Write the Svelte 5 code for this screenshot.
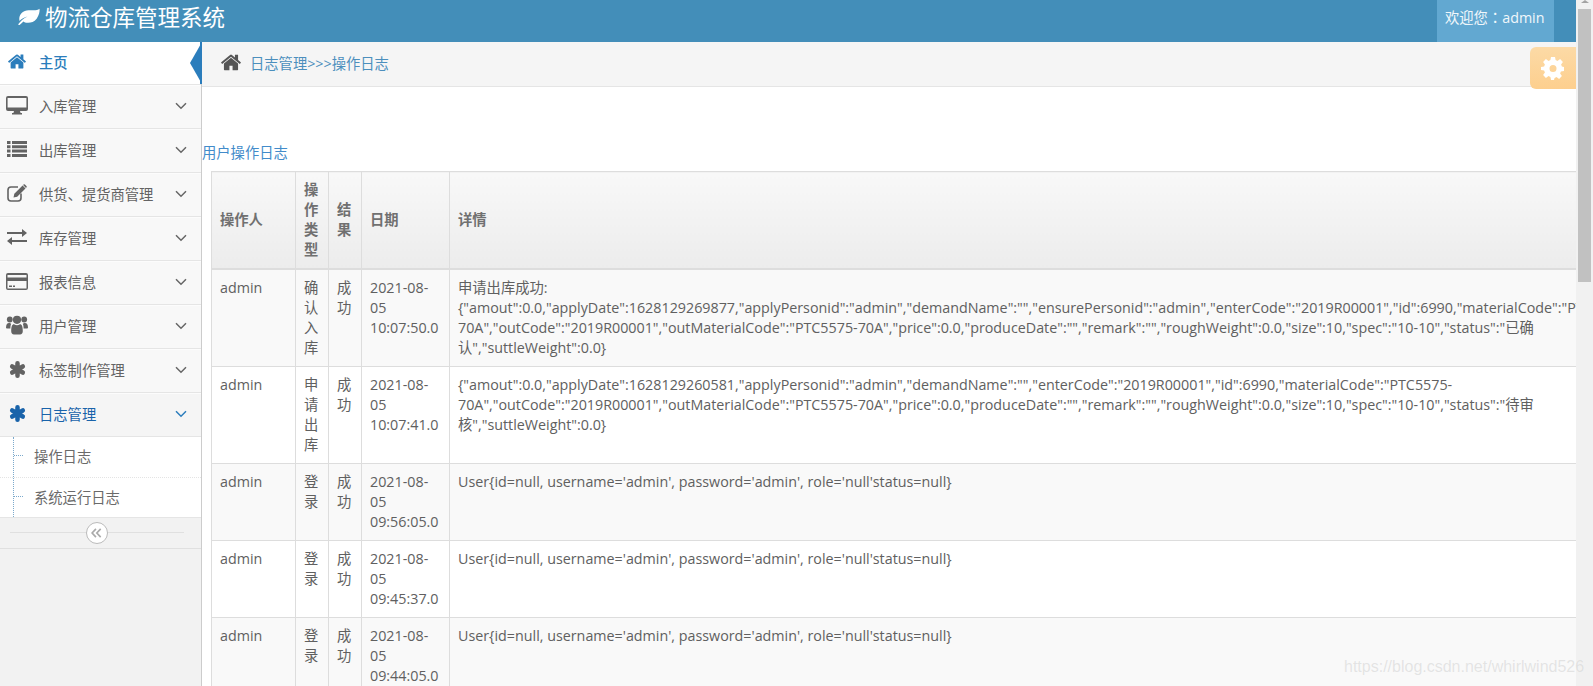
<script>
  const menu = [
    { label: '入库管理', icon: 'desktop' },
    { label: '出库管理', icon: 'list' },
    { label: '供货、提货商管理', icon: 'edit' },
    { label: '库存管理', icon: 'exchange' },
    { label: '报表信息', icon: 'card' },
    { label: '用户管理', icon: 'group' },
    { label: '标签制作管理', icon: 'asterisk' }
  ];
  const subs = ['操作日志', '系统运行日志'];
  const userLine = "User{id=null, username='admin', password='admin', role='null'status=null}";
  const rows = [
    {
      type: '确认入库', date: '2021-08-05 10:07:50.0',
      lines: [
        '申请出库成功:',
        '{"amout":0.0,"applyDate":1628129269877,"applyPersonid":"admin","demandName":"","ensurePersonid":"admin","enterCode":"2019R00001","id":6990,"materialCode":"PTC5575-',
        '70A","outCode":"2019R00001","outMaterialCode":"PTC5575-70A","price":0.0,"produceDate":"","remark":"","roughWeight":0.0,"size":10,"spec":"10-10","status":"已确',
        '认","suttleWeight":0.0}'
      ]
    },
    {
      type: '申请出库', date: '2021-08-05 10:07:41.0',
      lines: [
        '{"amout":0.0,"applyDate":1628129260581,"applyPersonid":"admin","demandName":"","enterCode":"2019R00001","id":6990,"materialCode":"PTC5575-',
        '70A","outCode":"2019R00001","outMaterialCode":"PTC5575-70A","price":0.0,"produceDate":"","remark":"","roughWeight":0.0,"size":10,"spec":"10-10","status":"待审',
        '核","suttleWeight":0.0}'
      ]
    },
    { type: '登录', date: '2021-08-05 09:56:05.0', lines: [userLine] },
    { type: '登录', date: '2021-08-05 09:45:37.0', lines: [userLine] },
    { type: '登录', date: '2021-08-05 09:44:05.0', lines: [userLine] }
  ];
  const homePath = 'M1472 992v480q0 26-19 45t-45 19h-384v-384h-256v384h-384q-26 0-45-19t-19-45v-480q0-1 .5-3t.5-3l575-474 575 474q1 2 1 6zm223-69l-62 74q-8 9-21 11h-3q-13 0-21-7l-692-577-692 577q-12 8-24 7-13-2-21-11l-62-74q-8-10-7-23.500t11-21.500l719-599q32-26 76-26t76 26l244 204v-195q0-14 9-23t23-9h192q14 0 23 9t9 23v408l219 182q10 8 11 21.500t-7 23.500z';
</script>

{#snippet chevron()}
  <svg class="chev" viewBox="0 0 12 8" width="12" height="8"><path d="M1 1.200 6 6.200 11 1.200" fill="none" stroke="currentColor" stroke-width="1.500"/></svg>
{/snippet}

{#snippet asterisk()}
  <svg viewBox="0 0 18 18" width="17" height="17"><g stroke="currentColor" stroke-width="4.800" stroke-linecap="round"><path d="M9 2.500v13M3.400 5.750l11.200 6.500M14.600 5.750 3.400 12.250"/></g></svg>
{/snippet}

{#snippet icon(name)}
  <span class="ico">
    {#if name === 'desktop'}
      <svg viewBox="0 0 22 19" width="22" height="19"><path fill="currentColor" d="M2 0h18a2 2 0 0 1 2 2v11a2 2 0 0 1-2 2h-6l.6 2H16v1.500H6V17h1.400l.6-2H2a2 2 0 0 1-2-2V2a2 2 0 0 1 2-2zm-.4 2v9.500h18.800V2z"/></svg>
    {:else if name === 'list'}
      <svg viewBox="0 0 20 16" width="20" height="16"><path fill="currentColor" d="M0 0h3.500v3H0zM5 0h15v3H5zM0 4.300h3.500v3H0zM5 4.300h15v3H5zM0 8.600h3.500v3H0zM5 8.600h15v3H5zM0 12.900h3.500v3H0zM5 12.900h15v3H5z"/></svg>
    {:else if name === 'edit'}
      <svg viewBox="0 0 20 18" width="20" height="18"><path fill="none" stroke="currentColor" stroke-width="1.600" d="M14 9.500v4.500a3 3 0 0 1-3 3H4a3 3 0 0 1-3-3V6a3 3 0 0 1 3-3h7"/><path fill="currentColor" d="M15.600 1.500l2.900 2.900-8.300 8.300-3.700.8.800-3.700zM16.500.6a1 1 0 0 1 1.400 0l1.500 1.500a1 1 0 0 1 0 1.400l-.4.4-2.900-2.900z"/></svg>
    {:else if name === 'exchange'}
      <svg viewBox="0 0 20 16" width="20" height="16"><path fill="currentColor" d="M0 3h15V0l5 4-5 4V5H0zM20 11H5V8l-5 4 5 4v-3h15z"/></svg>
    {:else if name === 'card'}
      <svg viewBox="0 0 22 17" width="22" height="17"><path fill="currentColor" fill-rule="evenodd" d="M2 0h18a2 2 0 0 1 2 2v13a2 2 0 0 1-2 2H2a2 2 0 0 1-2-2V2a2 2 0 0 1 2-2zM1.500 2v2.500h19V2zm0 6v7.500h19V8zM3 12.500h3V14H3zm4 0h2V14H7z"/></svg>
    {:else if name === 'group'}
      <svg viewBox="0 0 22 20" width="22" height="20"><g fill="currentColor"><circle cx="3.800" cy="4.500" r="2.900"/><circle cx="18.200" cy="4.500" r="2.900"/><circle cx="11" cy="4.800" r="4.100"/><path d="M0 13c0-3.500 1-5 3-5 1 0 1.500.4 2.200.8-.6 1.300-.8 2.800-.8 4.700H1c-.6 0-1-.2-1-.5zM22 13c0-3.500-1-5-3-5-1 0-1.500.4-2.200.8.6 1.300.8 2.800.8 4.700H21c.6 0 1-.2 1-.5zM8 9.300c1 .6 2 .9 3 .9s2-.3 3-.9c2 0 2.800 2.500 2.800 6.700 0 2-1 3.500-2.800 3.500H8C6.200 19.500 5.200 18 5.200 16c0-4.200.8-6.700 2.800-6.700z"/></g></svg>
    {:else}
      {@render asterisk()}
    {/if}
  </span>
{/snippet}

<div class="screen">
  <div class="page">
    <header class="topbar">
      <div class="brand">
        <svg viewBox="0 0 24 18" width="23" height="18"><path fill="#fff" d="M23.500.500c.4 2.800-.5 7-3 10.200-2.700 3.400-6.500 4.400-9.500 4.200-2 0-3.500-.6-4.300-1.300-1.200 1-2.600 2.300-4 3.700-.8.500-1.700-.2-1.200-1 1.500-2.200 5.300-6 9.500-7.800-3.300.6-6.500 2.800-8.400 4.600C1.500 7.500 5 3.300 10 2.300c5-.9 10.800.8 13.500-1.800z"/></svg>
        <span>物流仓库管理系统</span>
      </div>
      <div class="welcome">欢迎您<span class="colon">：</span>admin</div>
    </header>

    <div class="body">
      <aside class="sidebar">
        <a class="item active">
          <span class="ico"><svg viewBox="0 128 1792 1536" width="20" height="17"><path fill="currentColor" d={homePath}/></svg></span>
          <span>主页</span>
          <i class="caret"></i>
        </a>
        {#each menu as m}
          <a class="item">
            {@render icon(m.icon)}
            <span>{m.label}</span>
            {@render chevron()}
          </a>
        {/each}
        <a class="item open">
          <span class="ico">{@render asterisk()}</span>
          <span>日志管理</span>
          {@render chevron()}
        </a>
        <ul class="submenu">
          {#each subs as s}
            <li>{s}</li>
          {/each}
        </ul>
        <div class="collapse">
          <span class="rule"></span>
          <span class="circle">
            <svg viewBox="0 0 10 9" width="11" height="10"><path d="M4.500.800 1 4.500l3.500 3.700M8.800.800 5.300 4.500l3.500 3.700" fill="none" stroke="#aaa" stroke-width="1.500"/></svg>
          </span>
        </div>
      </aside>

      <main class="main">
        <div class="crumbs">
          <svg viewBox="0 128 1792 1536" width="22" height="19"><path fill="#555" d={homePath}/></svg>
          <a>日志管理&gt;&gt;&gt;操作日志</a>
        </div>
        <div class="content">
          <div class="title">用户操作日志</div>
          <table>
            <colgroup>
              <col style="width:84px" /><col style="width:33px" /><col style="width:33px" /><col style="width:88px" /><col />
            </colgroup>
            <thead>
              <tr><th>操作人</th><th>操作类型</th><th>结果</th><th>日期</th><th>详情</th></tr>
            </thead>
            <tbody>
              {#each rows as r}
                <tr>
                  <td>admin</td>
                  <td>{r.type}</td>
                  <td>成功</td>
                  <td>{r.date}</td>
                  <td class="detail">
                    {#each r.lines as line}
                      <div>{line}</div>
                    {/each}
                  </td>
                </tr>
              {/each}
            </tbody>
          </table>
        </div>
        <div class="settings">
          <svg viewBox="0 0 24 24" width="24" height="24"><path fill="#fff" fill-rule="evenodd" d="M10 1h4l.6 3.100 1.900.8 2.600-1.800 2.800 2.800-1.800 2.600.8 1.900L23 11v4l-3.100.6-.8 1.900 1.800 2.600-2.800 2.800-2.600-1.800-1.900.8L13 24h-3l-.6-3.100-1.900-.8-2.600 1.800-2.800-2.800 1.800-2.600-.8-1.900L0 14v-3l3.100-.6.8-1.900L2.100 5.900l2.800-2.800 2.600 1.800 1.900-.8zM12 9a3.500 3.500 0 1 0 0 7 3.500 3.500 0 0 0 0-7z"/></svg>
        </div>
      </main>
    </div>
  </div>

  <div class="scrollbar">
    <span class="up"></span>
    <span class="thumb"></span>
  </div>
  <span class="watermark">https://blog.csdn.net/whirlwind526</span>
</div>

<style>
  :global(body) { margin: 0; overflow: hidden; background: #fff; }
  .screen {
    position: relative; display: flex; height: 686px; width: 1593px; overflow: hidden;
    font-family: "Open Sans", "Noto Sans CJK SC", sans-serif; font-size: 14.300px; color: #606060;
  }
  .page { width: 1576px; display: flex; flex-direction: column; }

  .topbar {
    height: 42px; flex: none; background: #438eb9; display: flex; justify-content: space-between;
    color: #fff; padding-right: 22px; box-sizing: border-box;
  }
  .brand { display: flex; align-items: center; gap: 5px; padding-left: 17px; font-size: 22.500px; height: 33px; }
  .welcome {
    background: #62a8d1; width: 117px; box-sizing: border-box; padding: 7px 0 0 8px;
    line-height: 20px; color: #f0f7fb; white-space: nowrap;
  }
  .colon { font-family: "Noto Sans CJK TC", sans-serif; }

  .body { flex: 1; display: flex; min-height: 0; }
  .sidebar {
    width: 202px; flex: none; box-sizing: border-box; background: #f2f2f2;
    border-right: 1px solid #ccc;
  }
  .item {
    position: relative; display: flex; align-items: center; height: 44px; box-sizing: border-box;
    background: #f8f8f8; border-top: 1px solid #fcfcfc; border-bottom: 1px solid #e5e5e5; color: #636363;
    padding-bottom: 4px;
  }
  .item.active { height: 43px; background: #fff; color: #2b7dbc; font-weight: 500; border-top: 0; }
  .item.open { background: #f5f5f5; color: #1963aa; }
  .ico { width: 39px; flex: none; display: flex; justify-content: center; padding-right: 5px; box-sizing: border-box; }
  .item .ico svg { display: block; }
  .chev { position: absolute; left: 175px; top: 16px; color: #666; }
  .item.open .chev { color: #2b7dbc; }
  .caret {
    position: absolute; right: -1px; top: 0; bottom: 0; width: 2px; background: #2b7dbc;
  }
  .caret::before {
    content: ""; position: absolute; right: 0; top: 0;
    border: solid transparent; border-width: 21px 12px 21px 0; border-right-color: #2b7dbc;
  }
  .submenu {
    list-style: none; margin: 0; padding: 0; background: #fff; position: relative;
    border-bottom: 1px solid #e5e5e5;
  }
  .submenu::before {
    content: ""; position: absolute; left: 13px; top: 0; bottom: 0; border-left: 1px dotted #7ba9cc;
  }
  .submenu li {
    position: relative; height: 40px; line-height: 39px; padding-left: 34px; color: #6a6a6a;
    border-bottom: 1px dotted #e4e4e4;
  }
  .submenu li:last-child { border-bottom: 0; height: 39px; }
  .submenu li::before {
    content: ""; position: absolute; left: 14px; top: 18px; width: 9px; border-top: 1px dotted #7ba9cc;
  }
  .collapse {
    position: relative; height: 30px; border-bottom: 1px solid #e0e0e0; display: flex;
    align-items: center; justify-content: center; padding: 0 11px 0 10px;
  }
  .rule { position: absolute; left: 10px; right: 17px; top: 14px; border-top: 1px solid #e0e0e0; }
  .circle {
    position: relative; width: 20px; height: 20px; border-radius: 50%; border: 1px solid #bbb; background: #fff;
    display: flex; align-items: center; justify-content: center; margin-left: -7px;
  }

  .main { position: relative; flex: 1; min-width: 0; overflow: hidden; }
  .crumbs {
    height: 45px; box-sizing: border-box; background: #f5f5f5; border-bottom: 1px solid #e5e5e5;
    display: flex; align-items: center; gap: 8px; padding-left: 18px; padding-bottom: 4px;
  }
  .crumbs a { color: #4c8fbd; }
  .title { margin-top: 56px; height: 28px; line-height: 20px; color: #428bca; }
  table {
    width: 1400px; margin-left: 9px; border-collapse: collapse; table-layout: fixed;
    line-height: 20px; border-top: 1px solid #ddd;
  }
  th, td { border: 1px solid #ddd; padding: 8px; text-align: left; vertical-align: top; }
  th {
    vertical-align: middle; font-weight: 600; color: #707070; border-bottom: 2px solid #ddd;
    background: linear-gradient(#f8f8f8, #ececec); line-height: 20px;
  }
  tbody tr:nth-child(odd) { background: #f9f9f9; }
  .detail div { white-space: nowrap; }
  .settings {
    position: absolute; right: 0; top: 5px; width: 46px; height: 42px; border-radius: 6px 0 0 6px;
    background: linear-gradient(#fcdaa6, #fdcf8e); display: flex; align-items: center; justify-content: center;
  }

  .scrollbar { position: relative; width: 17px; flex: none; background: #f1f1f1; }
  .up {
    position: absolute; left: 5px; top: 0; border: solid transparent;
    border-width: 0 4px 3px 4px; border-bottom-color: #a3a3a3;
  }
  .thumb { position: absolute; left: 2px; right: 2px; top: 9px; height: 273px; background: #c1c1c1; }
  .watermark {
    position: absolute; left: 1344px; top: 658px; font: 16px "Liberation Sans", sans-serif;
    color: rgba(180, 180, 180, .35); text-shadow: 0 0 1px rgba(255, 255, 255, .6);
  }
</style>
